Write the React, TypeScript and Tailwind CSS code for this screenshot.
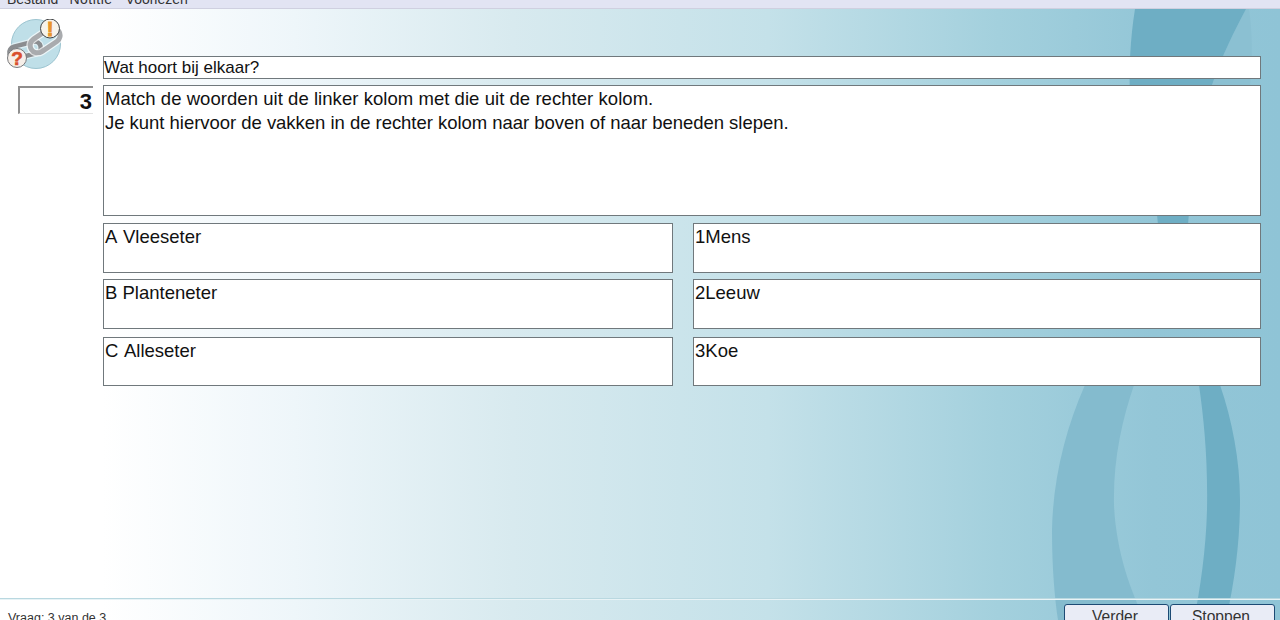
const font = "font-['Liberation_Sans',Arial,sans-serif]";

function LinkIcon() {
  return (
    <svg width="58" height="54" viewBox="0 0 58 54" className="block">
      <circle cx="31" cy="25" r="24.5" fill="#bfdfe8" stroke="#9cc4d0" />
      <g fill="none">
        <rect x="4" y="25" width="32" height="12" rx="6" transform="rotate(-14 20 31)" stroke="#fff" strokeWidth="7" opacity="0.5" />
        <rect x="4" y="25" width="32" height="12" rx="6" transform="rotate(-14 20 31)" stroke="#8b8d90" strokeWidth="4.5" />
        <rect x="24" y="14" width="33" height="15" rx="7.5" transform="rotate(-34 40 22)" stroke="#fff" strokeWidth="7.5" opacity="0.7" />
        <rect x="24" y="14" width="33" height="15" rx="7.5" transform="rotate(-34 40 22)" stroke="#a9abae" strokeWidth="5" />
      </g>
      <circle cx="45" cy="9.5" r="9.5" fill="#f7f3ea" stroke="#3f4244" />
      <text x="45" y="16.5" textAnchor="middle" fontSize="20" fontWeight="700" fill="#e8952a" stroke="#e8952a" strokeWidth="1" fontFamily="Liberation Sans">!</text>
      <circle cx="12" cy="39" r="9.5" fill="#f6efe9" stroke="#77797c" />
      <text x="12" y="46" textAnchor="middle" fontSize="19" fontWeight="700" fill="#d94f2c" stroke="#d94f2c" strokeWidth="0.6" fontFamily="Liberation Sans">?</text>
    </svg>
  );
}

function Waves() {
  return (
    <svg width="1280" height="611" viewBox="0 9 1280 611" className="absolute left-0 top-0">
      <path d="M1246 9 C1235 30 1222 55 1212 85 L1250 85 C1253 55 1252 30 1249 9 Z" fill="#8bc0d2" />
      <path d="M1135 9 C1130 40 1129 70 1130 95 C1140 130 1155 180 1158 225 L1188 225 C1192 170 1200 130 1212 85 C1222 55 1235 30 1246 9 Z" fill="#6eaec4" />
      <path d="M1085 385 C1065 430 1053 480 1052 530 C1052 570 1055 600 1058 620 L1145 620 C1130 590 1116 550 1114 505 C1113 460 1122 420 1134 385 Z" fill="#84bbce" />
      <path d="M1199 385 C1204 420 1208 460 1207 510 C1206 550 1200 590 1194 620 L1226 620 C1235 580 1240 540 1240 500 C1240 460 1232 420 1220 385 Z" fill="#6eaec4" />
    </svg>
  );
}

function Box({ className, children }: { className: string; children?: React.ReactNode }) {
  return (
    <div className={`bg-white border border-[#70787c] text-[#111] ${className}`}>
      {children}
    </div>
  );
}

const left = ['A Vleeseter', 'B Planteneter', 'C Alleseter'];
const right = ['1Mens', '2Leeuw', '3Koe'];
const rowStyles = ['h-[50px]', 'h-[50px] mt-[6px]', 'h-[49px] mt-[8px]'];
const leftSpacing = ['[word-spacing:1.5px]', '', '[word-spacing:1.5px]'];

export default function App() {
  return (
    <div className={`${font} w-[1280px] h-[620px] overflow-hidden flex flex-col bg-white`}>
      <div className="h-[9px] shrink-0 bg-[#e2e4f3] border-b border-[#cfd0e0] flex items-end pl-[7px] overflow-hidden">
        <span className="text-[14px] leading-[16px] text-[#333] mb-[1px]">Bestand</span>
        <span className="text-[14px] leading-[16px] text-[#333] mb-[1px] ml-[11px] tracking-[0.5px]">Notitie</span>
        <span className="text-[14px] leading-[16px] text-[#333] mb-[1px] ml-[13px]">Voorlezen</span>
      </div>

      <div className="relative flex-1 flex flex-col bg-[linear-gradient(90deg,#ffffff_8%,#eef6fa_23%,#d8eaef_40%,#c4e1e9_60%,#a3d0dd_78%,#93c6d7_90%,#8fc4d6_100%)]">
        <Waves />
        <div className="relative flex-1 flex">
          <div className="w-[103px] shrink-0 flex flex-col pt-[10px]">
            <div className="pl-[5px]">
              <LinkIcon />
            </div>
            <div className="ml-[18px] mt-[13px] w-[75px] h-[28px] bg-white border-t-2 border-l-2 border-[#8f8f8f] border-b border-b-[#e4e4e4] flex items-center justify-end pr-[1px] pt-[1px]">
              <span className="text-[22px] font-bold text-[#111]">3</span>
            </div>
          </div>

          <div className="w-[1158px] pt-[47px]">
            <Box className="h-[23px] text-[17px] leading-[21px]">Wat hoort bij elkaar?</Box>
            <Box className="h-[131px] mt-[6px] pl-[1px] pt-[1px] text-[18.5px] leading-[24px]">
              <div className="tracking-[0.05px]">Match de woorden uit de linker kolom met die uit de rechter kolom.</div>
              <div className="tracking-[-0.03px]">Je kunt hiervoor de vakken in de rechter kolom naar boven of naar beneden slepen.</div>
            </Box>
            <div className="mt-[7px] flex justify-between">
              <div className="w-[570px]">
                {left.map((t, i) => (
                  <Box key={t} className={`pl-[1px] text-[18.5px] leading-[25px] ${rowStyles[i]} ${leftSpacing[i]}`}>{t}</Box>
                ))}
              </div>
              <div className="w-[568px]">
                {right.map((t, i) => (
                  <Box key={t} className={`pl-[1px] text-[18.5px] leading-[25px] ${rowStyles[i]}`}>{t}</Box>
                ))}
              </div>
            </div>
          </div>
        </div>

        <div className="relative h-[22px] shrink-0 border-t border-[#b9d8e0] shadow-[inset_0_1px_0_#e8f3f6] flex justify-between pl-[8px] pr-[5px]">
          <span className="text-[12.5px] leading-[14px] text-[#333] mt-[12px]">Vraag: 3 van de 3</span>
          <div className="flex gap-[1px] pt-[5px]">
            <button className="w-[105px] h-[24px] bg-[#e9ecf6] border border-[#1c4a74] rounded-[3px] text-[15.6px] leading-[18px] text-[#333] flex justify-center pt-[3px] pr-[3px]">Verder</button>
            <button className="w-[105px] h-[24px] bg-[#e9ecf6] border border-[#1c4a74] rounded-[3px] text-[15.6px] leading-[18px] text-[#333] flex justify-center pt-[3px] pr-[3px]">Stoppen</button>
          </div>
        </div>
      </div>
    </div>
  );
}
